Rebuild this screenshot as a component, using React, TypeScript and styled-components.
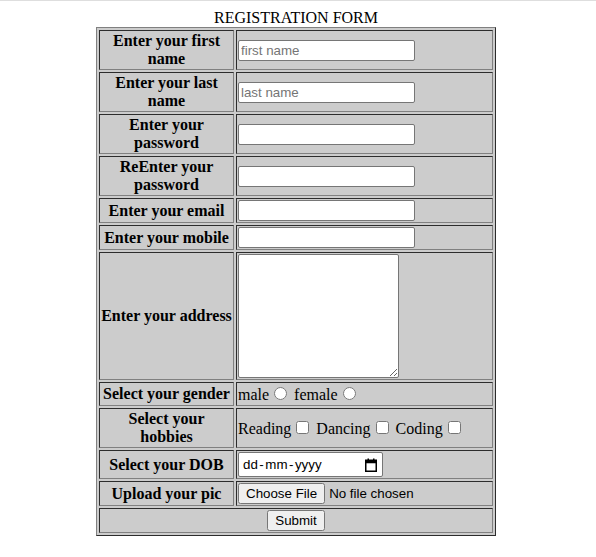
import React from "react";
import styled, { createGlobalStyle } from "styled-components";

const Global = createGlobalStyle`
  html { border-top: 1px solid #dedede; }
  body {
    margin: 8px 12px 8px 8px;
    font-family: "Liberation Serif", "Times New Roman", serif;
    font-size: 16px;
    color: #000;
    background: #fff;
  }
  input, textarea, button {
    font-family: "Liberation Sans", Arial, sans-serif;
    font-size: 13.3333px;
  }
`;

const Table = styled.table`
  margin: 0 auto;
  width: 400px;
  background: #cccccc;
  border: 1px outset grey;
  border-spacing: 2px;
  border-collapse: separate;
`;

const Caption = styled.caption`
  font-size: 16px;
  text-align: center;
`;

const Label = styled.th`
  border: 1px inset grey;
  padding: 1px;
  width: 132px;
  font-weight: bold;
  text-align: center;
  vertical-align: middle;
`;

const Field = styled.td<{ $center?: boolean }>`
  border: 1px inset grey;
  padding: 1px;
  text-align: ${(p) => (p.$center ? "center" : "left")};
  vertical-align: middle;
  white-space: nowrap;
`;

const TextInput = styled.input`
  width: 177px;
  height: 21px;
  box-sizing: border-box;
  padding: 1px 2px;
  border: 1px solid #767676;
  border-radius: 2px;
  background: #fff;
  &::placeholder { color: #757575; }
`;

const Address = styled.textarea`
  width: 161px;
  height: 124px;
  box-sizing: border-box;
  border: 1px solid #767676;
  border-radius: 2px;
  vertical-align: middle;
  font-family: "Liberation Mono", monospace;
`;

const Choice = styled.input`
  margin: 3px 3px 0 5px;
`;

const DateBox = styled.label`
  display: inline-flex;
  align-items: center;
  justify-content: space-between;
  width: 145px;
  height: 25px;
  box-sizing: border-box;
  padding: 0 5px 0 4px;
  border: 1px solid #767676;
  border-radius: 2px;
  background: #fff;
  vertical-align: middle;
  font-family: "Liberation Sans", Arial, sans-serif;
  font-size: 13.3333px;
  color: #000;
`;

const DateText = styled.span`
  display: inline-flex;
  align-items: center;
`;

const Sep = styled.span`
  margin: 0 1.5px;
`;

const FileInput = styled.input`
  font-family: "Liberation Sans", Arial, sans-serif;
`;

function CalendarIcon() {
  return (
    <svg width="12" height="14" viewBox="0 0 12 14" aria-hidden="true">
      <rect x="2.5" y="0.5" width="1.5" height="2.5" fill="#000" />
      <rect x="8" y="0.5" width="1.5" height="2.5" fill="#000" />
      <rect x="0.75" y="2.25" width="10.5" height="11" fill="none" stroke="#000" strokeWidth="1.5" />
      <rect x="0.75" y="2.25" width="10.5" height="3" fill="#000" />
    </svg>
  );
}

export default function App() {
  return (
    <>
      <Global />
      <form onSubmit={(e) => e.preventDefault()}>
        <Table>
          <Caption>REGISTRATION FORM</Caption>
          <tbody>
            <tr>
              <Label>Enter your first name</Label>
              <Field><TextInput type="text" placeholder="first name" /></Field>
            </tr>
            <tr>
              <Label>Enter your last name</Label>
              <Field><TextInput type="text" placeholder="last name" /></Field>
            </tr>
            <tr>
              <Label>Enter your password</Label>
              <Field><TextInput type="password" /></Field>
            </tr>
            <tr>
              <Label>ReEnter your password</Label>
              <Field><TextInput type="password" /></Field>
            </tr>
            <tr>
              <Label>Enter your email</Label>
              <Field><TextInput type="email" /></Field>
            </tr>
            <tr>
              <Label>Enter your mobile</Label>
              <Field><TextInput type="tel" /></Field>
            </tr>
            <tr>
              <Label>Enter your address</Label>
              <Field><Address /></Field>
            </tr>
            <tr>
              <Label>Select your gender</Label>
              <Field>
                male<Choice type="radio" name="g" /> female<Choice type="radio" name="g" />
              </Field>
            </tr>
            <tr>
              <Label>Select your hobbies</Label>
              <Field>
                Reading<Choice type="checkbox" /> Dancing<Choice type="checkbox" /> Coding<Choice type="checkbox" />
              </Field>
            </tr>
            <tr>
              <Label>Select your DOB</Label>
              <Field>
                <DateBox>
                  <DateText>dd<Sep>-</Sep>mm<Sep>-</Sep>yyyy</DateText>
                  <CalendarIcon />
                </DateBox>
              </Field>
            </tr>
            <tr>
              <Label>Upload your pic</Label>
              <Field><FileInput type="file" /></Field>
            </tr>
            <tr>
              <Field colSpan={2} $center><button type="submit">Submit</button></Field>
            </tr>
          </tbody>
        </Table>
      </form>
    </>
  );
}
